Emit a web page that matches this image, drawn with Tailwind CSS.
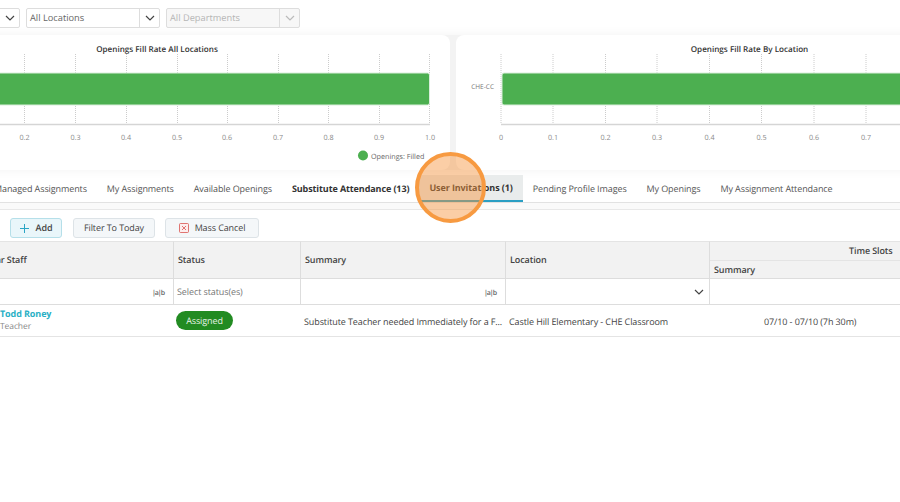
<!DOCTYPE html>
<html lang="en">
<head>
  <meta charset="UTF-8" />
  <title>Substitute Attendance</title>
  <script src="https://cdn.jsdelivr.net/npm/@tailwindcss/browser@4"></script>
</head>
<body class="bg-white w-[900px] h-[502px] overflow-hidden relative font-['Open_Sans',sans-serif] [text-rendering:geometricPrecision] text-[9px] tracking-[-0.1px] text-[#444]">
  <div class="-ml-[100px] w-[1100px]">
    <!-- Filters -->
    <div class="flex gap-[6px] pt-[8px] h-[35px] pl-[26px] text-[9.25px] tracking-normal">
      <div class="w-[94px] h-[20px] border border-[#ddd] rounded-[2px] flex justify-end">
        <div class="w-[20px] border-l border-[#ddd] flex items-center justify-center">
          <svg width="10" height="6" viewBox="0 0 10 6" fill="none" stroke="#444" stroke-width="1.2"><path d="M1 1l4 4 4-4"/></svg>
        </div>
      </div>
      <div class="w-[134px] h-[20px] border border-[#ddd] rounded-[2px] flex items-center">
        <span class="flex-1 pl-[3px] text-[#666]">All Locations</span>
        <div class="w-[20px] h-full border-l border-[#ddd] flex items-center justify-center">
          <svg width="10" height="6" viewBox="0 0 10 6" fill="none" stroke="#444" stroke-width="1.2"><path d="M1 1l4 4 4-4"/></svg>
        </div>
      </div>
      <div class="w-[134px] h-[20px] border border-[#ddd] rounded-[2px] flex items-center bg-[#f7f7f7]">
        <span class="flex-1 pl-[3px] text-[#b5b5b5]">All Departments</span>
        <div class="w-[20px] h-full border-l border-[#ddd] flex items-center justify-center">
          <svg width="10" height="6" viewBox="0 0 10 6" fill="none" stroke="#bbb" stroke-width="1.2"><path d="M1 1l4 4 4-4"/></svg>
        </div>
      </div>
    </div>

    <!-- Charts -->
    <div class="flex gap-[6px] h-[135px] bg-[#f3f3f3] shadow-[0_0_10px_rgba(0,0,0,0.06)]">
      <div class="w-[550px] bg-white rounded-[8px] overflow-hidden">
        <svg width="550" height="135" class="text-[7.2px] tracking-normal">
          <text x="257" y="16.5" text-anchor="middle" class="text-[8.1px] font-semibold" fill="#333">Openings Fill Rate All Locations</text>
          <g stroke="#ccc" stroke-dasharray="1 1">
            <path d="M124.500 19V89M175.500 19V89M226.500 19V89M277.500 19V89M327.500 19V89M378.500 19V89M428.500 19V89M479.500 19V89M529.500 19V89"/>
          </g>
          <path d="M0 89.500H530" stroke="#d5d5d5" stroke-width="1.500"/>
          <rect x="0" y="38" width="529.500" height="32" rx="2" fill="#4caf50" stroke="#d9eeda"/>
          <g fill="#888" text-anchor="middle">
            <text x="124.500" y="105">0.2</text><text x="175.500" y="105">0.3</text><text x="226" y="105">0.4</text>
            <text x="277" y="105">0.5</text><text x="327" y="105">0.6</text><text x="378" y="105">0.7</text>
            <text x="428.500" y="105">0.8</text><text x="479" y="105">0.9</text><text x="530" y="105">1.0</text>
          </g>
          <circle cx="463" cy="120.500" r="5" fill="#4caf50"/>
          <text x="471" y="123.500" fill="#666">Openings: Filled</text>
        </svg>
      </div>
      <div class="flex-1 bg-white rounded-[8px] overflow-hidden">
        <svg width="544" height="135" class="text-[7.2px] tracking-normal">
          <text x="293.500" y="16.500" text-anchor="middle" class="text-[8.1px] font-semibold" fill="#333">Openings Fill Rate By Location</text>
          <g stroke="#ccc" stroke-dasharray="1 1">
            <path d="M45 19V89M97 19V89M149.500 19V89M201 19V89M253.500 19V89M305.500 19V89M358 19V89M410 19V89M462 19V89"/>
          </g>
          <path d="M45 89.500H544" stroke="#d5d5d5" stroke-width="1.500"/>
          <rect x="46" y="38" width="500" height="32" rx="2" fill="#4caf50" stroke="#d9eeda"/>
          <text x="38" y="53.500" text-anchor="end" class="text-[6.5px]" fill="#777">CHE-CC</text>
          <g fill="#888" text-anchor="middle">
            <text x="45" y="105">0</text><text x="97" y="105">0.1</text><text x="149.500" y="105">0.2</text>
            <text x="201" y="105">0.3</text><text x="253.500" y="105">0.4</text><text x="305.500" y="105">0.5</text>
            <text x="358" y="105">0.6</text><text x="410" y="105">0.7</text><text x="462" y="105">0.8</text>
          </g>
        </svg>
      </div>
    </div>

    <!-- Tabs -->
    <div class="flex h-[32px] items-end border-b border-[#e2e2e2] pl-[84px] text-[#555] mt-[1px]">
      <div class="h-[27px] px-[10px] flex items-center">Managed Assignments</div>
      <div class="h-[27px] px-[10px] flex items-center">My Assignments</div>
      <div class="h-[27px] px-[10px] flex items-center">Available Openings</div>
      <div class="h-[27px] px-[10px] flex items-center font-bold text-[#333]">Substitute Attendance (13)</div>
      <div class="h-[27px] px-[10px] flex items-center font-bold text-[#333] bg-[#e9ecec] border-b-2 border-[#2b9fc4]">User Invitations (1)</div>
      <div class="h-[27px] px-[10px] flex items-center">Pending Profile Images</div>
      <div class="h-[27px] px-[10px] flex items-center">My Openings</div>
      <div class="h-[27px] px-[10px] flex items-center">My Assignment Attendance</div>
    </div>
    <div class="h-[7px] bg-[#fafafa] border-b border-[#e8e8e8]"></div>

    <!-- Toolbar -->
    <div class="flex gap-[11px] items-end h-[31px] pl-[110px] pb-[3px]">
      <div class="h-[20px] w-[52px] rounded-[3px] border border-[#b5dfe9] bg-[#e9f6fa] flex items-center justify-center gap-[7px]">
        <svg width="9" height="9" viewBox="0 0 9 9" stroke="#2aa5c5"><path d="M4.500 0v9M0 4.500h9"/></svg>
        <span class="font-semibold text-[#444]">Add</span>
      </div>
      <div class="h-[20px] w-[82px] rounded-[3px] border border-[#dde3e7] bg-[#f4f7f9] flex items-center justify-center">Filter To Today</div>
      <div class="h-[20px] w-[94px] -ml-[1px] rounded-[3px] border border-[#dde3e7] bg-[#f4f7f9] flex items-center justify-center gap-[6px]">
        <svg width="10" height="10" viewBox="0 0 10 10" fill="#fdeeee" stroke="#d9534f" stroke-width="0.8"><rect x="0.500" y="0.500" width="9" height="9" rx="1"/><path d="M3 3l4 4M7 3l-4 4"/></svg>
        <span>Mass Cancel</span>
      </div>
    </div>

    <!-- Table -->
    <div class="grid grid-cols-[273px_127px_205px_204px_291px] text-[#444]">
      <div class="row-span-2 h-[38px] bg-[#f2f2f2] border-t border-[#e4e4e4] border-b border-b-[#ddd] flex items-center pl-[72px] font-semibold">Regular Staff</div>
      <div class="row-span-2 h-[38px] bg-[#f2f2f2] border-t border-[#e4e4e4] border-b border-b-[#ddd] border-l border-l-[#ddd] flex items-center pl-[4px] font-semibold">Status</div>
      <div class="row-span-2 h-[38px] bg-[#f2f2f2] border-t border-[#e4e4e4] border-b border-b-[#ddd] border-l border-l-[#ddd] flex items-center pl-[4px] font-semibold">Summary</div>
      <div class="row-span-2 h-[38px] bg-[#f2f2f2] border-t border-[#e4e4e4] border-b border-b-[#ddd] border-l border-l-[#ddd] flex items-center pl-[4px] font-semibold">Location</div>
      <div class="h-[38px] bg-[#f2f2f2] border-t border-[#e4e4e4] border-b border-b-[#ddd] border-l border-l-[#ddd] row-span-2 flex flex-col">
        <div class="h-[19px] flex items-center border-b border-[#e4e4e4] pl-[139px] font-semibold">Time Slots</div>
        <div class="flex-1 flex items-center pl-[4px] pt-[1px] font-semibold">Summary</div>
      </div>

      <div class="h-[26px] border-b border-[#ddd] flex items-center justify-end pr-[9px] pt-[5px] text-[7px] tracking-[-1px] font-semibold text-[#666]">|a|b</div>
      <div class="h-[26px] border-b border-[#ddd] border-l border-l-[#ddd] flex items-center pl-[3px] pt-[1px] text-[#777]">Select status(es)</div>
      <div class="h-[26px] border-b border-[#ddd] border-l border-l-[#ddd] flex items-center justify-end pr-[9px] pt-[5px] text-[7px] tracking-[-1px] font-semibold text-[#666]">|a|b</div>
      <div class="h-[26px] border-b border-[#ddd] border-l border-l-[#ddd] flex items-center justify-end pr-[5px]">
        <svg width="10" height="6" viewBox="0 0 10 6" fill="none" stroke="#444" stroke-width="1.2"><path d="M1 1l4 4 4-4"/></svg>
      </div>
      <div class="h-[26px] border-b border-[#ddd] border-l border-l-[#ddd]"></div>

      <div class="h-[32px] border-b border-[#e4e4e4] flex flex-col justify-center pl-[100px]">
        <span class="font-bold text-[#2ab0c5] leading-[13px]">Todd Roney</span>
        <span class="text-[8.5px] text-[#888] leading-[14px]">Teacher</span>
      </div>
      <div class="h-[32px] border-b border-[#e4e4e4] flex items-center pl-[3px]">
        <span class="w-[57px] h-[19px] rounded-full bg-[#228b22] text-[#e8f3e8] flex items-center justify-center">Assigned</span>
      </div>
      <div class="h-[32px] border-b border-[#e4e4e4] flex items-center pl-[4px] pt-[2px] whitespace-nowrap overflow-hidden">Substitute Teacher needed Immediately for a F...</div>
      <div class="h-[32px] border-b border-[#e4e4e4] flex items-center pl-[4px] pt-[2px] whitespace-nowrap">Castle Hill Elementary - CHE Classroom</div>
      <div class="h-[32px] border-b border-[#e4e4e4] flex items-center pl-[55px] pt-[2px] whitespace-nowrap">07/10 - 07/10 (7h 30m)</div>
    </div>
  </div>

  <!-- Click highlight -->
  <div class="absolute left-[415px] top-[152px] w-[71px] h-[71px] rounded-full bg-[#f7933a]/45 border-[4px] border-[#f79a41]"></div>
</body>
</html>
